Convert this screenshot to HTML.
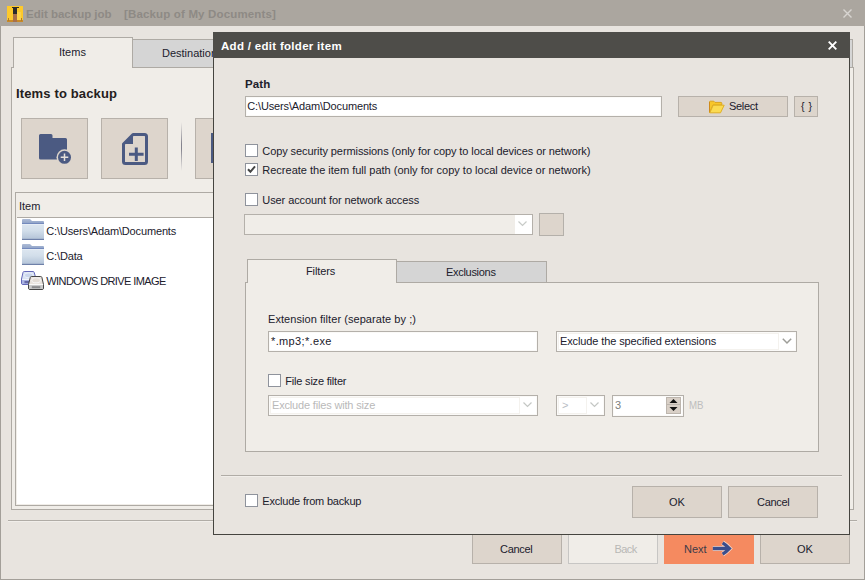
<!DOCTYPE html>
<html>
<head>
<meta charset="utf-8">
<title>Edit backup job</title>
<style>
*{box-sizing:border-box;margin:0;padding:0}
html,body{width:865px;height:580px;overflow:hidden}
body{position:relative;background:#e8e4df;font-family:"Liberation Sans",sans-serif;font-size:11px;color:#20202c}
.a{position:absolute}
.t{position:absolute;white-space:pre;font-size:11px;line-height:13px;color:#20202c}
.b{font-weight:bold}
.btn{position:absolute;background:#ddd5cc;border:1px solid #b7b1aa}
.in{position:absolute;background:#fff;border:1px solid #b4b0aa;box-shadow:inset 0 0 0 1px #fbfaf8}
.cb{position:absolute;width:13px;height:13px;background:#fff;border:1px solid #8f939c}
.ln{position:absolute;background:#aeaaa4}
</style>
</head>
<body>
<!-- ===== main window chrome ===== -->
<div class="a" style="left:0;top:0;width:865px;height:26px;background:#aba69f"></div>
<div class="a" style="left:0;top:26px;width:1px;height:554px;background:#a39f99"></div>
<div class="a" style="left:864px;top:26px;width:1px;height:554px;background:#a39f99"></div>
<div class="a" style="left:0;top:579px;width:865px;height:1px;background:#a39f99"></div>

<!-- app icon -->
<svg class="a" style="left:7px;top:6px" width="16" height="16" viewBox="0 0 16 16">
<rect width="16" height="16" fill="#fdc92b"/>
<rect x="0" y="14" width="16" height="2" fill="#c98a26"/>
<rect x="1" y="12" width="1" height="3" fill="#b07a2a"/>
<rect x="14" y="12" width="1" height="3" fill="#b07a2a"/>
<rect x="10" y="6" width="4" height="8" fill="#fdd24a"/>
<rect x="5" y="1" width="7" height="1" fill="#2c2a28"/>
<rect x="6" y="1" width="4" height="7" fill="#2c2b2b"/>
<rect x="6" y="8" width="4" height="8" fill="#a8704a"/>
</svg>
<div class="t b" id="ttl1" style="left:26px;top:7px;font-size:11.5px;line-height:14px;color:#8e8a85">Edit backup job</div>
<div class="t b" id="ttl2" style="left:124px;top:7px;font-size:11.5px;line-height:14px;color:#8e8a85;letter-spacing:0.16px">[Backup of My Documents]</div>
<!-- main close X -->
<svg class="a" style="left:842px;top:8px" width="11" height="11" viewBox="0 0 11 11"><path d="M1.5 1.5L9.5 9.5M9.5 1.5L1.5 9.5" stroke="#d8d5d1" stroke-width="1.4" fill="none"/></svg>

<!-- ===== main tab control ===== -->
<!-- page -->
<div class="a" style="left:11px;top:67px;width:843px;height:443px;background:#f0ede8;border:1px solid #aeaaa4"></div>
<!-- inactive tab(s) -->
<div class="a" style="left:132px;top:39px;width:721px;height:29px;background:#d5d5d5;border:1px solid #aeaaa4"></div>
<!-- active tab -->
<div class="a" style="left:13px;top:37px;width:120px;height:31px;background:#f0ede8;border:1px solid #aeaaa4;border-bottom:none"></div>
<div class="a" style="left:12px;top:67px;width:2px;height:1px;background:#aeaaa4"></div>
<div class="t" id="tabItems" style="left:59px;top:46px">Items</div>
<div class="t" id="tabDest" style="left:162px;top:47px">Destination</div>

<div class="t b" id="hdg" style="left:16px;top:86px;font-size:13px;line-height:15px;letter-spacing:0.14px;color:#24201c">Items to backup</div>

<!-- big buttons -->
<div class="btn" style="left:21px;top:118px;width:67px;height:61px"></div>
<svg class="a" style="left:21px;top:118px" width="67" height="61" viewBox="0 0 67 61">
<path d="M19.5 16 h10.5 q1.5 0 1.5 1.5 v2.5 h13 q1.500 0 1.500 1.500 v18.5 q0 1.500 -1.500 1.500 h-25 q-1.500 0 -1.500 -1.500 v-22.500 q0 -1.500 1.500 -1.500z" fill="#4b5a82"/>
<circle cx="43.500" cy="39.300" r="8" fill="#ddd5cc"/>
<circle cx="43.500" cy="39.300" r="6.500" fill="#4b5a82"/>
<path d="M43.500 35.500v7.600M39.700 39.300h7.600" stroke="#e6e1db" stroke-width="1.500" fill="none"/>
</svg>
<div class="btn" style="left:101px;top:118px;width:67px;height:61px"></div>
<svg class="a" style="left:101px;top:118px" width="67" height="61" viewBox="0 0 67 61">
<path d="M32 16.500 H43.500 Q45.500 16.500 45.500 18.500 V43.500 Q45.500 45.500 43.500 45.500 H24.500 Q22.500 45.500 22.500 43.500 V26 Z" fill="none" stroke="#4b5a82" stroke-width="3" stroke-linejoin="round"/>
<path d="M32 16.500 V26 H22.500 Z" fill="#4b5a82"/>
<path d="M35.300 29.500v13.500M28 36.200h14.600" stroke="#4b5a82" stroke-width="3" fill="none"/>
</svg>
<div class="a" style="left:181px;top:122px;width:1px;height:49px;background:linear-gradient(to bottom,rgba(96,96,112,0),rgba(96,96,112,0.75) 45%,rgba(96,96,112,0.75) 55%,rgba(96,96,112,0))"></div>
<div class="btn" style="left:195px;top:118px;width:67px;height:61px"></div>
<div class="a" style="left:211px;top:133px;width:10px;height:30px;background:#4b5a82"></div>

<!-- list -->
<div class="a" style="left:15px;top:192px;width:600px;height:314px;background:#fff;border:1px solid #aeaaa4"></div>
<div class="a" style="left:16px;top:193px;width:598px;height:24px;background:#f0ede8"></div>
<div class="a" style="left:16px;top:193px;width:1px;height:312px;background:#f0ede8"></div>
<div class="a" style="left:16px;top:504px;width:598px;height:1px;background:#f0ede8"></div>
<div class="ln" style="left:17px;top:217px;width:597px;height:1px"></div>
<div class="t" id="hdrItem" style="left:19px;top:200px">Item</div>

<svg class="a" style="left:22px;top:219px" width="22" height="21" viewBox="0 0 22 21"><use href="#fold"/></svg>
<svg class="a" style="left:22px;top:244px" width="22" height="21" viewBox="0 0 22 21"><use href="#fold"/></svg>
<svg width="0" height="0" style="position:absolute"><defs>
<linearGradient id="fb" x1="0" y1="0" x2="0" y2="1"><stop offset="0" stop-color="#aebcd6"/><stop offset="1" stop-color="#8b9fc6"/></linearGradient>
<linearGradient id="fg" x1="0" y1="0" x2="0" y2="1"><stop offset="0" stop-color="#dde6f0"/><stop offset="0.45" stop-color="#d2deea"/><stop offset="1" stop-color="#b4c4d8"/></linearGradient>
<g id="fold">
<path d="M0 1 Q0 0 1 0 H8 L10 2 H21 Q22 2 22 3 V5 H0Z" fill="url(#fb)"/>
<rect x="0" y="4" width="22" height="1" fill="#748abd"/>
<rect x="0" y="5" width="22" height="15" fill="url(#fg)"/>
<rect x="0" y="5" width="22" height="1" fill="#e6edf5"/>
<rect x="0" y="20" width="22" height="1" fill="#6e80a8"/>
<rect x="0" y="19" width="22" height="1" fill="#a9b9d0"/>
</g></defs></svg>
<!-- drive image icon -->
<svg class="a" style="left:21px;top:271px" width="24" height="20" viewBox="0 0 24 20">
<path d="M3.200 0.500 H12 Q12.900 0.500 13.200 1.400 L15 8 V12 Q15 13.500 13.500 13.500 H2 Q0.500 13.500 0.500 12 V8 L2 1.400 Q2.300 0.500 3.200 0.500Z" fill="#d8e2f3" stroke="#6367b8" stroke-width="1"/>
<path d="M1 8.800 H14.500 V12 Q14.500 13 13.500 13 H2 Q1 13 1 12Z" fill="#a9b3e3"/>
<path d="M1 8.500H14.500" stroke="#f1f4fc" stroke-width="1"/>
<ellipse cx="7.800" cy="4.300" rx="4.200" ry="2.400" fill="#cad6ec" stroke="#eef3fb" stroke-width="0.900"/>
<rect x="3.500" y="10" width="8" height="2.200" fill="#666aa8"/>
<path d="M10.500 5.500 H19.700 Q20.600 5.500 20.900 6.400 L22.500 13.500 V17 Q22.500 18.500 21 18.500 H9 Q7.500 18.500 7.500 17 V13.500 L9.300 6.400 Q9.600 5.500 10.500 5.500Z" fill="#e9e3dd" stroke="#454545" stroke-width="1"/>
<path d="M8 13.800 H22 V17 Q22 18 21 18 H9 Q8 18 8 17Z" fill="#c9c9c9"/>
<path d="M8 13.500H22" stroke="#fbfaf9" stroke-width="1"/>
<ellipse cx="15.100" cy="9.300" rx="4.300" ry="2.500" fill="#e4ddd6" stroke="#f8f8fb" stroke-width="0.900"/>
<rect x="10.800" y="15.200" width="8.500" height="2" fill="#8b8b8d"/>
</svg>
<div class="t" id="row1" style="left:46.300px;top:225px;letter-spacing:-0.15px">C:\Users\Adam\Documents</div>
<div class="t" id="row2" style="left:46.300px;top:250px;letter-spacing:-0.15px">C:\Data</div>
<div class="t" id="row3" style="left:46.300px;top:275px;letter-spacing:-0.6px">WINDOWS DRIVE IMAGE</div>

<!-- separator + bottom buttons -->
<div class="ln" style="left:8px;top:520px;width:849px;height:1px;background:#b0aca6"></div>
<div class="a" style="left:8px;top:521px;width:849px;height:1px;background:#f1eeea"></div>
<div class="btn" style="left:472px;top:532px;width:90px;height:32px"></div>
<div class="t" id="mCancel" style="left:500px;top:543px;letter-spacing:-0.3px">Cancel</div>
<div class="btn" style="left:568px;top:532px;width:90px;height:32px;background:#f0ede8;border-color:#c7c6c4"></div>
<div class="t" id="mBack" style="left:614.500px;top:543px;color:#b8b8b6;letter-spacing:-0.600px">Back</div>
<div class="a" style="left:664px;top:532px;width:90px;height:32px;background:#f58a60"></div>
<div class="t" id="mNext" style="left:684px;top:543px;color:#3c3a48">Next</div>
<svg class="a" style="left:710px;top:539px" width="25" height="19" viewBox="0 0 25 19">
<path d="M2.800 9.500H18.500M12.600 3.800Q16.500 6.200 19.500 9.500Q16.500 12.800 12.600 15.200" fill="none" stroke="#fbd9c8" stroke-width="4.800" stroke-linecap="butt" stroke-linejoin="miter"/>
<path d="M2.800 9.500H18.500M12.600 3.800Q16.500 6.200 19.500 9.500Q16.500 12.800 12.600 15.200" fill="none" stroke="#3b4e8c" stroke-width="3.300" stroke-linecap="butt" stroke-linejoin="miter"/>
</svg>
<div class="btn" style="left:760px;top:532px;width:90px;height:32px"></div>
<div class="t" id="mOK" style="left:797px;top:543px">OK</div>

<!-- ===== dialog ===== -->
<div class="a" id="dlg" style="left:213px;top:32px;width:637px;height:503px;background:#e8e4df;border:1px solid #45443f"></div>
<div class="a" style="left:213px;top:32px;width:637px;height:26px;background:#4e4d49"></div>
<div class="t b" id="dttl" style="left:221px;top:39px;font-size:11.500px;line-height:14px;color:#fff;letter-spacing:0.300px">Add / edit folder item</div>
<svg class="a" style="left:827px;top:40px" width="11" height="11" viewBox="0 0 11 11"><path d="M1.700 1.700L9.300 9.300M9.300 1.700L1.700 9.300" stroke="#fff" stroke-width="1.900" fill="none"/></svg>

<div class="t b" id="lblPath" style="left:245px;top:78px;font-size:11.500px;letter-spacing:0.15px">Path</div>
<div class="in" style="left:245px;top:96px;width:417px;height:21px"></div>
<div class="t" id="pathTxt" style="left:247.300px;top:100px;letter-spacing:-0.15px">C:\Users\Adam\Documents</div>
<div class="btn" style="left:678px;top:96px;width:110px;height:21px"></div>
<svg class="a" style="left:709px;top:100px" width="16" height="14" viewBox="0 0 16 14">
<path d="M0.500 2 Q0.500 1.200 1.300 1.200 H4.800 L6 2.400 H12 Q12.800 2.400 12.800 3.200 V5 H4 L0.500 12.500Z" fill="#f8c62a" stroke="#dba41e" stroke-width="1"/>
<path d="M0.500 2V12.500" stroke="#cf8a1a" stroke-width="1"/>
<path d="M4.200 5.200 H15.200 L11.500 12.800 H0.800Z" fill="#fbdb52" stroke="#e0b024" stroke-width="1" stroke-linejoin="round"/>
</svg>
<div class="t" id="selTxt" style="left:729px;top:100px;letter-spacing:-0.3px">Select</div>
<div class="btn" style="left:794px;top:96px;width:24px;height:21px"></div>
<div class="t" id="brTxt" style="left:801px;top:100px;font-size:10.500px;letter-spacing:0.500px">{ }</div>

<div class="cb" style="left:245px;top:144px"></div>
<div class="t" id="c1" style="left:262.300px;top:145px;letter-spacing:-0.084px">Copy security permissions (only for copy to local devices or network)</div>
<div class="cb" style="left:245px;top:163px"></div>
<svg class="a" style="left:247px;top:165px" width="9" height="9" viewBox="0 0 9 9"><path d="M1 4.300L3.400 6.800L8 1.400" fill="none" stroke="#454545" stroke-width="2"/></svg>
<div class="t" id="c2" style="left:262.300px;top:164px">Recreate the item full path (only for copy to local device or network)</div>
<div class="cb" style="left:245px;top:193px"></div>
<div class="t" id="c3" style="left:262.300px;top:194px;letter-spacing:-0.09px">User account for network access</div>

<!-- disabled combo + small button -->
<div class="in" style="left:244px;top:214px;width:289px;height:21px;background:#f0ede8;box-shadow:none"></div>
<div class="a" style="left:515px;top:215px;width:17px;height:19px;background:#fff"></div>
<svg class="a" style="left:518px;top:221px" width="9" height="6" viewBox="0 0 9 6"><path d="M0.500 0.500L4.500 4.500L8.500 0.500" fill="none" stroke="#c8cbc8" stroke-width="1.200"/></svg>
<div class="btn" style="left:539px;top:213px;width:25px;height:23px;border-color:#b4b0aa"></div>

<!-- inner tab control -->
<div class="a" style="left:245px;top:282px;width:574px;height:170px;background:#f0ede8;border:1px solid #aeaaa4"></div>
<div class="a" style="left:396px;top:261px;width:151px;height:22px;background:#d5d5d5;border:1px solid #aeaaa4"></div>
<div class="a" style="left:247px;top:259px;width:150px;height:24px;background:#f0ede8;border:1px solid #aeaaa4;border-bottom:none"></div>
<div class="a" style="left:246px;top:282px;width:2px;height:1px;background:#aeaaa4"></div>
<div class="t" id="tabF" style="left:306px;top:265px;letter-spacing:-0.1px">Filters</div>
<div class="t" id="tabE" style="left:446px;top:266px;letter-spacing:-0.3px">Exclusions</div>

<div class="t" id="lblExt" style="left:268px;top:313px;letter-spacing:0.06px">Extension filter (separate by ;)</div>
<div class="in" style="left:268px;top:331px;width:270px;height:21px"></div>
<div class="t" id="extTxt" style="left:271px;top:335px;letter-spacing:0.350px">*.mp3;*.exe</div>
<div class="in" style="left:556px;top:331px;width:241px;height:21px"></div>
<div class="a" style="left:558px;top:333px;width:221px;height:17px;border:1px solid #f4f2ee"></div>
<svg class="a" style="left:782px;top:338px" width="10" height="7" viewBox="0 0 10 7"><path d="M0.800 0.800L5 5L9.200 0.800" fill="none" stroke="#9d9d98" stroke-width="1.500"/></svg>
<div class="t" id="cmbTxt" style="left:560px;top:335px;letter-spacing:-0.11px">Exclude the specified extensions</div>

<div class="cb" style="left:268px;top:374px"></div>
<div class="t" id="lblFs" style="left:285.300px;top:375px;letter-spacing:-0.2px">File size filter</div>
<div class="in" style="left:268px;top:395px;width:270px;height:21px"></div>
<div class="a" style="left:270px;top:397px;width:250px;height:17px;border:1px solid #f4f2ee"></div>
<svg class="a" style="left:523px;top:402px" width="9" height="6" viewBox="0 0 9 6"><path d="M0.500 0.500L4.500 4.500L8.500 0.500" fill="none" stroke="#c4c7c4" stroke-width="1.200"/></svg>
<div class="t" id="fsTxt" style="left:272px;top:399px;color:#b9b9b9;letter-spacing:-0.17px">Exclude files with size</div>
<div class="in" style="left:556px;top:395px;width:49px;height:21px"></div>
<div class="a" style="left:558px;top:397px;width:29px;height:17px;border:1px solid #f4f2ee"></div>
<svg class="a" style="left:590px;top:402px" width="9" height="6" viewBox="0 0 9 6"><path d="M0.500 0.500L4.500 4.500L8.500 0.500" fill="none" stroke="#c4c7c4" stroke-width="1.200"/></svg>
<div class="t" id="gtTxt" style="left:562px;top:399px;color:#b8bcc4">&gt;</div>
<div class="in" style="left:612px;top:395px;width:72px;height:22px"></div>
<div class="t" id="n3" style="left:615px;top:399px;color:#7c807c">3</div>
<div class="a" style="left:666px;top:397px;width:15px;height:17px;background:#d9d0c7;border:1px solid #bdb6ae"></div>
<div class="a" style="left:667px;top:404px;width:13px;height:1px;background:#bdb6ae"></div>
<svg class="a" style="left:669px;top:398px" width="9" height="14" viewBox="0 0 9 14"><path d="M0.500 5L4.500 1L8.500 5Z" fill="#111"/><path d="M0.500 9L4.500 13L8.500 9Z" fill="#111"/></svg>
<div class="t" id="mb" style="left:688.500px;top:399px;color:#bdbdbd;transform:scaleX(0.880);transform-origin:0 0">MB</div>

<!-- dialog bottom -->
<div class="ln" style="left:221px;top:475px;width:621px;height:1px;background:#b0aca6"></div>
<div class="a" style="left:221px;top:476px;width:621px;height:1px;background:#f1eeea"></div>
<div class="cb" style="left:245px;top:494px"></div>
<div class="t" id="exb" style="left:262.300px;top:495px;letter-spacing:-0.2px">Exclude from backup</div>
<div class="btn" style="left:632px;top:486px;width:90px;height:32px"></div>
<div class="t" id="dOK" style="left:669px;top:496px">OK</div>
<div class="btn" style="left:728px;top:486px;width:90px;height:32px"></div>
<div class="t" id="dCancel" style="left:757px;top:496px;letter-spacing:-0.3px">Cancel</div>
</body>
</html>
